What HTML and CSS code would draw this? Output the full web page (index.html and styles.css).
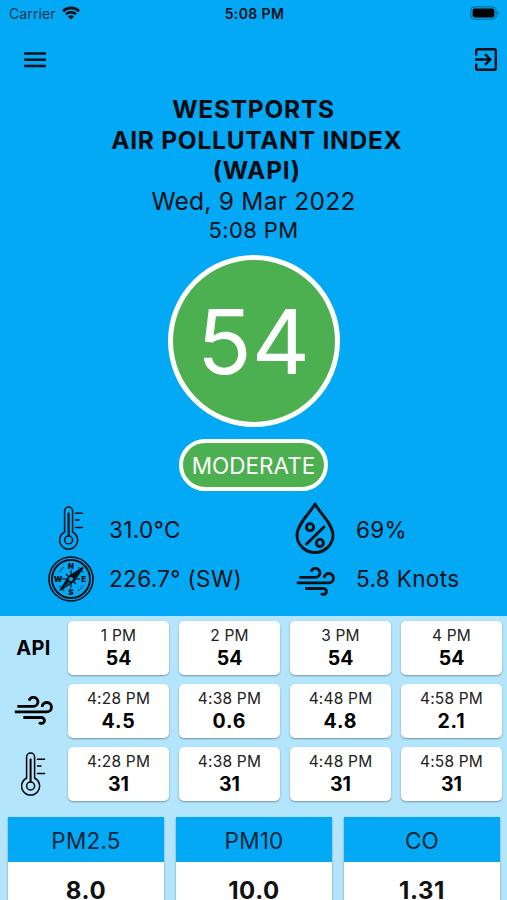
FILE: index.html
```html
<!DOCTYPE html>
<html lang="en">
<head>
    <meta charset="UTF-8">
    <meta name="viewport" content="width=device-width, initial-scale=1.0">
    <title>Westports Air Pollutant Index</title>
    <link rel="stylesheet" href="styles.css">
</head>
<body>
    <!-- Shared icons -->
    <svg class="icon-defs" width="0" height="0">
        <symbol id="thermometer" viewBox="0 0 25 44">
            <g fill="none" stroke="currentColor" stroke-width="1.5" stroke-linecap="round">
                <path d="M5.6 26V5a4 4 0 0 1 8 0v21a9 9 0 1 1-8 0z"/>
                <path d="M9.6 29.5V7.5" stroke-width="2"/>
                <circle cx="9.6" cy="34" r="4"/>
                <path d="M16.5 7.2h7M16.5 14h3.5M16.5 21.6h7"/>
            </g>
        </symbol>
        <symbol id="wind" viewBox="0 0 39 29">
            <g fill="none" stroke="currentColor" stroke-width="2.8">
                <path d="M3.3 10.3H19.5a4.5 4.5 0 1 0-4.4-5.6"/>
                <path d="M.8 15.9H32.8a4.7 4.7 0 1 0-4.7-5.1"/>
                <path d="M9.3 21.5h18.2a3 3 0 1 1-2.4 4.9"/>
            </g>
        </symbol>
    </svg>

    <div class="app">
        <!-- Status Bar -->
        <div class="status-bar">
            <div class="carrier">
                <span>Carrier</span>
                <svg class="wifi" viewBox="0 0 18 14">
                    <g fill="none" stroke="#001018" stroke-width="2.7">
                        <path d="M1 5.2a11.3 11.3 0 0 1 16 0"/>
                        <path d="M3.9 8.3a7.2 7.2 0 0 1 10.2 0"/>
                    </g>
                    <path d="M9 13.6l-3-3.2a4.2 4.2 0 0 1 6 0z" fill="#001018"/>
                </svg>
            </div>
            <span class="clock">5:08 PM</span>
            <svg class="battery" viewBox="0 0 30 14">
                <rect x=".8" y=".8" width="25.4" height="12.4" rx="3.8" fill="none" stroke="#0474a6" stroke-width="1.3"/>
                <rect x="2.6" y="2.6" width="21.8" height="8.8" rx="2" fill="#000"/>
                <path d="M27.6 5v4c2-.8 2-3.2 0-4z" fill="#0474a6"/>
            </svg>
        </div>

        <!-- Toolbar -->
        <div class="toolbar">
            <svg class="menu-icon" viewBox="0 0 22 16">
                <path d="M0 1.4h22M0 7.7h22M0 13.9h22" stroke="#001018" stroke-width="2.5"/>
            </svg>
            <svg class="exit-icon" viewBox="0 0 22 23">
                <g fill="none" stroke="#001018" stroke-width="2.4">
                    <path d="M1.2 7.5V3q0-1.8 1.8-1.8h16q1.8 0 1.8 1.8v17q0 1.8-1.8 1.8H3q-1.8 0-1.8-1.8v-4.5"/>
                    <path d="M0 11.5h15M10 6.2l5.3 5.3-5.3 5.3"/>
                </g>
            </svg>
        </div>

        <!-- Title -->
        <div class="heading">
            <h1>WESTPORTS<br>&nbsp;AIR POLLUTANT INDEX<br>&nbsp;(WAPI)</h1>
            <div class="date">Wed, 9 Mar 2022</div>
            <div class="time">5:08 PM</div>
        </div>

        <!-- Current Index -->
        <div class="index">
            <div class="index-circle"><span>54</span></div>
            <div class="index-label"><span>MODERATE</span></div>
        </div>

        <!-- Readings -->
        <div class="readings">
            <div class="reading">
                <div class="reading-icon"><svg class="thermometer"><use href="#thermometer"/></svg></div>
                <span class="temp">31.0°C</span>
            </div>
            <div class="reading">
                <div class="reading-icon">
                    <svg class="drop" viewBox="0 0 40 52">
                        <g fill="none" stroke="#001018" stroke-width="2.9" stroke-linejoin="round">
                            <path d="M20 2C16 10 2 22 2 33a18 17.5 0 0 0 36 0C38 22 24 10 20 2z"/>
                            <circle cx="15" cy="25.2" r="3.6"/>
                            <circle cx="24.9" cy="41" r="3.6"/>
                            <path d="M29 25L11.5 42" stroke-linecap="round"/>
                        </g>
                    </svg>
                </div>
                <span class="humidity">69%</span>
            </div>
            <div class="reading">
                <div class="reading-icon">
                    <svg class="compass" viewBox="0 0 46 46">
                        <g fill="none" stroke="#001018">
                            <circle cx="23" cy="23" r="22" stroke-width="1.6"/>
                            <circle cx="23" cy="23" r="19" stroke-width="2"/>
                            <circle cx="23" cy="23" r="13.5" stroke-width="1.3" stroke-dasharray="1.2 1.4 1.2 1.4 1.2 14.8" stroke-dashoffset="-7"/>
                            <path d="M23 14v18M14 23h18M18 18l10 10" stroke-width="1.1"/>
                            <path d="M35 11.5L25.8 25.2 12 34.5l9-14z" stroke-width="1.5"/>
                            <circle cx="23" cy="23" r="3" stroke-width="1.6"/>
                        </g>
                        <path d="M35 11.5L25.8 25.2l-5-4.7zM12 34.5l10-9-2-3z" fill="#001018"/>
                        <circle cx="23" cy="23" r="2" fill="#03a9f4"/>
                        <g class="compass-letters">
                            <text x="23" y="12.5">N</text>
                            <text x="36" y="25.7">E</text>
                            <text x="23" y="39">S</text>
                            <text x="10.3" y="25.7">W</text>
                        </g>
                    </svg>
                </div>
                <span class="direction">226.7° (SW)</span>
            </div>
            <div class="reading">
                <div class="reading-icon"><svg class="wind"><use href="#wind"/></svg></div>
                <span class="speed">5.8 Knots</span>
            </div>
        </div>

        <!-- History -->
        <div class="history">
            <div class="history-row">
                <div class="row-label">API</div>
                <div class="card"><span>1 PM</span><b>54</b></div>
                <div class="card"><span>2 PM</span><b>54</b></div>
                <div class="card"><span>3 PM</span><b>54</b></div>
                <div class="card"><span>4 PM</span><b>54</b></div>
            </div>
            <div class="history-row">
                <div class="row-label"><svg class="wind"><use href="#wind"/></svg></div>
                <div class="card"><span>4:28 PM</span><b class="wide">4.5</b></div>
                <div class="card"><span>4:38 PM</span><b class="wide">0.6</b></div>
                <div class="card"><span>4:48 PM</span><b class="wide">4.8</b></div>
                <div class="card"><span>4:58 PM</span><b class="wide">2.1</b></div>
            </div>
            <div class="history-row">
                <div class="row-label"><svg class="thermometer"><use href="#thermometer"/></svg></div>
                <div class="card"><span>4:28 PM</span><b>31</b></div>
                <div class="card"><span>4:38 PM</span><b>31</b></div>
                <div class="card"><span>4:48 PM</span><b>31</b></div>
                <div class="card"><span>4:58 PM</span><b>31</b></div>
            </div>
        </div>

        <!-- Pollutants -->
        <div class="pollutants">
            <div class="pollutant">
                <div class="pollutant-name">PM2.5</div>
                <div class="pollutant-value">8.0</div>
            </div>
            <div class="pollutant">
                <div class="pollutant-name">PM10</div>
                <div class="pollutant-value">10.0</div>
            </div>
            <div class="pollutant">
                <div class="pollutant-name">CO</div>
                <div class="pollutant-value">1.31</div>
            </div>
        </div>
    </div>
</body>
</html>
```
FILE: styles.css
```css
* {
    box-sizing: border-box;
}

body {
    margin: 0;
    background-color: #b3e5fc;
    font-family: Inter, "Liberation Sans", sans-serif;
    color: #001018;
}

.icon-defs {
    display: block;
}

.app {
    width: 507px;
    height: 900px;
    overflow: hidden;
    background: linear-gradient(#03a9f4 616px, #b3e5fc 616px);
}

svg {
    display: block;
}

/* Status Bar */
.status-bar {
    display: grid;
    grid-template-columns: 1fr auto 1fr;
    align-items: center;
    height: 27px;
    padding: 0 7px 0 9px;
    font-size: 14px;
}

.carrier {
    display: flex;
    align-items: center;
    gap: 6px;
    color: #04324a;
    letter-spacing: 0.1px;
}

.wifi {
    width: 18px;
    height: 14px;
    margin-top: -1px;
}

.clock {
    font-size: 14px;
    font-weight: 600;
    letter-spacing: 0.4px;
}

.battery {
    width: 30px;
    height: 14px;
    justify-self: end;
    margin-top: -1px;
}

/* Toolbar */
.toolbar {
    display: flex;
    justify-content: space-between;
    align-items: center;
    height: 65px;
    padding: 0 10px 0 24px;
}

.menu-icon {
    width: 22px;
    height: 16px;
}

.exit-icon {
    width: 22px;
    height: 23px;
}

/* Title */
.heading {
    height: 163px;
    padding-top: 2px;
    text-align: center;
}

h1 {
    margin: 0;
    font-size: 24.5px;
    font-weight: 650;
    line-height: 30.5px;
    letter-spacing: 0.75px;
    color: #000c12;
}

.date {
    font-size: 24.5px;
    line-height: 30.5px;
    letter-spacing: 0.25px;
}

.time {
    font-size: 22px;
    line-height: 28px;
    letter-spacing: 0.4px;
}

/* Current Index */
.index {
    display: flex;
    flex-direction: column;
    align-items: center;
    height: 246px;
    color: #fff;
}

.index-circle {
    display: flex;
    align-items: center;
    justify-content: center;
    width: 172px;
    height: 172px;
    border: 5px solid #fff;
    border-radius: 50%;
    background-color: #4caf50;
    font-size: 90px;
}

.index-label {
    display: flex;
    align-items: center;
    justify-content: center;
    width: 149px;
    height: 52px;
    margin-top: 12px;
    border: 4px solid #fff;
    border-radius: 26px;
    background-color: #4caf50;
    font-size: 22.5px;
}

/* Readings */
.readings {
    display: grid;
    grid-template-columns: 247px 1fr;
    grid-template-rows: 49px 49px;
    height: 115px;
    padding: 4px 0 0 46px;
    font-size: 22.5px;
}

.reading {
    display: flex;
    align-items: center;
    letter-spacing: 0.35px;
}

.reading-icon {
    display: flex;
    justify-content: center;
    width: 50px;
    margin-right: 13px;
}

.reading .thermometer {
    margin-top: -4px;
}

.thermometer {
    width: 25px;
    height: 44px;
}

.wind {
    width: 39px;
    height: 29px;
}

.drop {
    width: 40px;
    height: 52px;
    margin-top: -3px;
    margin-right: 6px;
}

.reading .wind {
    margin-right: 5px;
    margin-top: 5px;
}

.compass {
    width: 46px;
    height: 46px;
    margin-top: 1px;
}

.compass-letters {
    font-size: 8px;
    font-weight: 900;
    text-anchor: middle;
    fill: #001018;
}

/* History */
.history {
    display: flex;
    flex-direction: column;
    gap: 9.5px;
    padding: 5px 5px 0 0;
    color: #000;
}

.history-row {
    display: grid;
    grid-template-columns: 58px repeat(4, 101px);
    column-gap: 10px;
    height: 53.5px;
}

.row-label {
    display: flex;
    align-items: center;
    justify-content: center;
    padding-left: 9px;
    font-size: 20px;
    font-weight: 700;
    letter-spacing: 0.3px;
}

.card {
    display: flex;
    flex-direction: column;
    align-items: center;
    padding-top: 4px;
    border-radius: 5px;
    background-color: #fff;
    box-shadow: 0 1px 2px rgba(0, 0, 0, 0.35);
}

.card span {
    font-size: 15.5px;
    line-height: 22px;
    letter-spacing: 0.2px;
    color: #222;
}

.card b {
    font-size: 19.5px;
    font-weight: 700;
    line-height: 23px;
}

.card .wide {
    letter-spacing: 0.9px;
}

/* Pollutants */
.pollutants {
    display: flex;
    gap: 12px;
    padding: 16px 7px 0 8px;
    text-align: center;
}

.pollutant {
    width: 156px;
    height: 100px;
    background-color: #fff;
    box-shadow: 0 1px 2px rgba(0, 0, 0, 0.35);
}

.pollutant-name {
    height: 45px;
    background-color: #03a9f4;
    font-size: 22.5px;
    line-height: 47px;
    letter-spacing: 0.2px;
    color: #04263a;
}

.pollutant-value {
    font-size: 24px;
    font-weight: 650;
    line-height: 57px;
    letter-spacing: 0.6px;
    color: #111;
}
```
